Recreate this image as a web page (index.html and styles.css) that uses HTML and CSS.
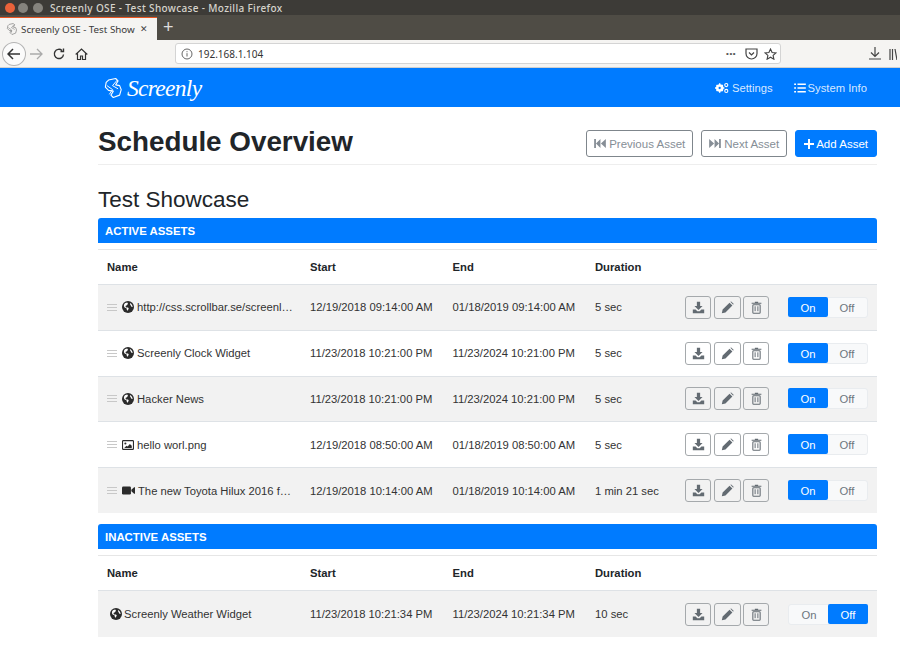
FILE: index.html
```html
<!DOCTYPE html>
<html lang="en">
<head>
  <meta charset="UTF-8">
  <title>Screenly OSE - Test Showcase</title>
  <link rel="stylesheet" href="styles.css">
</head>
<body>
  <svg class="defs" width="0" height="0">
    <symbol id="i-globe" viewBox="0 0 16 16">
      <circle cx="8" cy="8" r="8" fill="currentColor"/>
      <path d="M4.500 2.500l2.500-.5 1 1.500-1.500 2-2 1 1 2 2.500 0 1 1.500-1.500 3-1-1-.5-2.500-2.500-1-1-2 .5-2.500zM11 2.500l2 2 1.500 3-2 0-1-2-1-1.500z" fill="#fff"/>
    </symbol>
    <symbol id="i-image" viewBox="0 0 16 14">
      <rect x="0.700" y="1.200" width="14.600" height="11.600" rx="1" fill="none" stroke="currentColor" stroke-width="1.500"/>
      <circle cx="4.500" cy="5" r="1.400" fill="currentColor"/>
      <path d="M3 11l3-3 1.500 1 3-3.500 2.500 2.500v3z" fill="currentColor"/>
    </symbol>
    <symbol id="i-video" viewBox="0 0 16 12">
      <rect x="0" y="1" width="11" height="10" rx="1.500" fill="currentColor"/>
      <path d="M11.500 5l3.500-3h1v8h-1l-3.500-3z" fill="currentColor"/>
    </symbol>
    <symbol id="i-download" viewBox="0 0 16 16">
      <path d="M6 1h4v5h3l-5 5-5-5h3z" fill="currentColor"/>
      <path d="M1 10.500h3.500l2 2h3l2-2H15V15H1z" fill="currentColor"/>
    </symbol>
    <symbol id="i-pencil" viewBox="0 0 16 16">
      <path d="M1 15l1-4.500 8.500-8.500 3.500 3.500-8.500 8.500zM11.500 1l1-.500 3 3-.500 1z" fill="currentColor"/>
    </symbol>
    <symbol id="i-trash" viewBox="0 0 14 16">
      <path d="M5 2V1h4v1h4v1.500H1V2z" fill="currentColor"/>
      <rect x="2.500" y="4.500" width="9" height="10.500" rx="1" fill="none" stroke="currentColor" stroke-width="1.300"/>
      <path d="M5.300 6.500v6M8.700 6.500v6" stroke="currentColor" stroke-width="1.200"/>
    </symbol>
    <symbol id="i-gears" viewBox="0 0 18 14">
      <circle cx="6" cy="7" r="3.600" fill="none" stroke="currentColor" stroke-width="2.600"/>
      <path d="M6 1v12M0 7h12M2 3l8 8M10 3l-8 8" stroke="currentColor" stroke-width="1.800"/>
      <circle cx="6" cy="7" r="1.500" fill="#007bff"/>
      <circle cx="14.500" cy="3.200" r="2" fill="none" stroke="currentColor" stroke-width="1.400"/>
      <circle cx="14.500" cy="10.800" r="2" fill="none" stroke="currentColor" stroke-width="1.400"/>
    </symbol>
    <symbol id="i-list" viewBox="0 0 14 12">
      <path d="M4 1.500h10M4 6h10M4 10.500h10" stroke="currentColor" stroke-width="1.600"/>
      <path d="M0 .700h2.200v1.600H0zM0 5.200h2.200v1.600H0zM0 9.700h2.200v1.600H0z" fill="currentColor"/>
    </symbol>
    <symbol id="i-prev" viewBox="0 0 13 10">
      <path d="M0 0h2v10H0zM7 0v10L2 5zM13 0v10L7.500 5z" fill="currentColor"/>
    </symbol>
    <symbol id="i-next" viewBox="0 0 13 10">
      <path d="M11 0h2v10h-2zM6 0v10l5-5zM0 0v10l5.500-5z" fill="currentColor"/>
    </symbol>
    <symbol id="i-plus" viewBox="0 0 10 10">
      <path d="M4 0h2v4h4v2H6v4H4V6H0V4h4z" fill="currentColor"/>
    </symbol>
    <symbol id="i-mark" viewBox="0 0 24 26">
      <path d="M7 3l9-2 3 3-3 5 5 1 2 5-2 7-8 3-3-3 3-5-6-1-4-4 1-6z" fill="none" stroke="currentColor" stroke-width="1.400" stroke-linejoin="round"/>
      <path d="M5 10l7 5-4 6M18 3l-6 7 7 4" fill="none" stroke="currentColor" stroke-width="1.200"/>
    </symbol>
  </svg>

  <!-- browser window -->
  <div class="titlebar">
    <span class="dot dot-close"></span>
    <span class="dot"></span>
    <span class="dot dot-max"></span>
    <span class="titlebar-text">Screenly OSE - Test Showcase - Mozilla Firefox</span>
  </div>
  <div class="tabstrip">
    <div class="tab">
      <svg class="tab-icon"><use href="#i-mark"/></svg>
      <span class="tab-title">Screenly OSE - Test Show</span>
      <span class="tab-close">&#10005;</span>
    </div>
    <span class="tab-new">+</span>
  </div>
  <div class="toolbar">
    <span class="back">
      <svg width="14" height="12" viewBox="0 0 14 12"><path d="M1 6h12M6 1L1 6l5 5" fill="none" stroke="#333" stroke-width="1.500"/></svg>
    </span>
    <svg class="tool tool-forward" width="14" height="12" viewBox="0 0 14 12"><path d="M1 6h12M8 1l5 5-5 5" fill="none" stroke="#aaa" stroke-width="1.300"/></svg>
    <svg class="tool tool-reload" width="12" height="12" viewBox="0 0 12 12"><path d="M10.500 6.500A4.600 4.600 0 1 1 9 2.500M10.500 .500v3h-3" fill="none" stroke="#333" stroke-width="1.400"/></svg>
    <svg class="tool tool-home" width="13" height="12" viewBox="0 0 13 12"><path d="M.700 6.500L6.500 1l5.800 5.500M2.500 5.500v6h3V8h2v3.500h3v-6" fill="none" stroke="#333" stroke-width="1.200"/></svg>
    <div class="urlbar">
      <svg class="url-info" width="12" height="12" viewBox="0 0 12 12"><circle cx="6" cy="6" r="5" fill="none" stroke="#666"/><path d="M6 5.200v3.300M6 3.200v1" stroke="#666"/></svg>
      <span class="url-text">192.168.1.104</span>
      <span class="url-dots">&bull;&bull;&bull;</span>
      <svg class="url-pocket" width="13" height="12" viewBox="0 0 13 12"><path d="M1 1h11v4.500a5.500 5.500 0 0 1-11 0zM4 4.500l2.500 2.500L9 4.500" fill="none" stroke="#444" stroke-width="1.200"/></svg>
      <svg class="url-star" width="13" height="12" viewBox="0 0 13 12"><path d="M6.500 1l1.600 3.500 3.800.400-2.800 2.500.800 3.800-3.400-2-3.400 2 .800-3.800L1.100 4.900l3.800-.400z" fill="none" stroke="#444" stroke-width="1.100"/></svg>
    </div>
    <svg class="tool tool-down" width="12" height="13" viewBox="0 0 12 13"><path d="M6 0v9M2 5.500L6 9.500l4-4M0 12h12" fill="none" stroke="#444" stroke-width="1.200"/></svg>
    <svg class="tool" width="8" height="12" viewBox="0 0 8 12"><path d="M1 1v11M3.500 1v11M6 1l2 11" fill="none" stroke="#444" stroke-width="1.200"/></svg>
  </div>

  <!-- page -->
  <nav class="navbar">
    <div class="container navbar-inner">
      <a class="brand">
        <svg class="brand-mark"><use href="#i-mark"/></svg>
        <span class="brand-name">Screenly</span>
      </a>
      <div class="nav-links">
        <a class="nav-link"><svg class="ico-gears"><use href="#i-gears"/></svg>Settings</a>
        <a class="nav-link"><svg class="ico-list"><use href="#i-list"/></svg>System Info</a>
      </div>
    </div>
  </nav>

  <main class="container">
    <header class="page-head">
      <h1>Schedule Overview</h1>
      <div class="head-actions">
        <a class="btn btn-outline"><svg class="ico-step"><use href="#i-prev"/></svg>Previous Asset</a>
        <a class="btn btn-outline"><svg class="ico-step"><use href="#i-next"/></svg>Next Asset</a>
        <a class="btn btn-primary"><svg class="ico-plus"><use href="#i-plus"/></svg>Add Asset</a>
      </div>
    </header>

    <h2>Test Showcase</h2>

    <section class="panel">
      <h3 class="panel-title">Active Assets</h3>
      <table class="assets">
        <thead>
          <tr><th class="col-name">Name</th><th class="col-date">Start</th><th class="col-date">End</th><th class="col-dur">Duration</th><th class="col-act"></th><th class="col-tog"></th></tr>
        </thead>
        <tbody>
          <tr>
            <td><div class="name"><span class="grip"></span><svg class="type"><use href="#i-globe"/></svg><span class="name-text">http://css.scrollbar.se/screenl…</span></div></td>
            <td>12/19/2018 09:14:00 AM</td><td>01/18/2019 09:14:00 AM</td><td>5 sec</td>
            <td><div class="acts"><a class="act"><svg class="ico-act"><use href="#i-download"/></svg></a><a class="act act-wide"><svg class="ico-act"><use href="#i-pencil"/></svg></a><a class="act"><svg class="ico-act"><use href="#i-trash"/></svg></a></div></td>
            <td><div class="toggle"><span class="tg tg-on">On</span><span class="tg">Off</span></div></td>
          </tr>
          <tr>
            <td><div class="name"><span class="grip"></span><svg class="type"><use href="#i-globe"/></svg><span class="name-text">Screenly Clock Widget</span></div></td>
            <td>11/23/2018 10:21:00 PM</td><td>11/23/2024 10:21:00 PM</td><td>5 sec</td>
            <td><div class="acts"><a class="act"><svg class="ico-act"><use href="#i-download"/></svg></a><a class="act act-wide"><svg class="ico-act"><use href="#i-pencil"/></svg></a><a class="act"><svg class="ico-act"><use href="#i-trash"/></svg></a></div></td>
            <td><div class="toggle"><span class="tg tg-on">On</span><span class="tg">Off</span></div></td>
          </tr>
          <tr>
            <td><div class="name"><span class="grip"></span><svg class="type"><use href="#i-globe"/></svg><span class="name-text">Hacker News</span></div></td>
            <td>11/23/2018 10:21:00 PM</td><td>11/23/2024 10:21:00 PM</td><td>5 sec</td>
            <td><div class="acts"><a class="act"><svg class="ico-act"><use href="#i-download"/></svg></a><a class="act act-wide"><svg class="ico-act"><use href="#i-pencil"/></svg></a><a class="act"><svg class="ico-act"><use href="#i-trash"/></svg></a></div></td>
            <td><div class="toggle"><span class="tg tg-on">On</span><span class="tg">Off</span></div></td>
          </tr>
          <tr>
            <td><div class="name"><span class="grip"></span><svg class="type"><use href="#i-image"/></svg><span class="name-text">hello worl.png</span></div></td>
            <td>12/19/2018 08:50:00 AM</td><td>01/18/2019 08:50:00 AM</td><td>5 sec</td>
            <td><div class="acts"><a class="act"><svg class="ico-act"><use href="#i-download"/></svg></a><a class="act act-wide"><svg class="ico-act"><use href="#i-pencil"/></svg></a><a class="act"><svg class="ico-act"><use href="#i-trash"/></svg></a></div></td>
            <td><div class="toggle"><span class="tg tg-on">On</span><span class="tg">Off</span></div></td>
          </tr>
          <tr>
            <td><div class="name"><span class="grip"></span><svg class="type type-video"><use href="#i-video"/></svg><span class="name-text">The new Toyota Hilux 2016 f…</span></div></td>
            <td>12/19/2018 10:14:00 AM</td><td>01/18/2019 10:14:00 AM</td><td>1 min 21 sec</td>
            <td><div class="acts"><a class="act"><svg class="ico-act"><use href="#i-download"/></svg></a><a class="act act-wide"><svg class="ico-act"><use href="#i-pencil"/></svg></a><a class="act"><svg class="ico-act"><use href="#i-trash"/></svg></a></div></td>
            <td><div class="toggle"><span class="tg tg-on">On</span><span class="tg">Off</span></div></td>
          </tr>
        </tbody>
      </table>
    </section>

    <section class="panel">
      <h3 class="panel-title">Inactive Assets</h3>
      <table class="assets">
        <thead>
          <tr><th class="col-name">Name</th><th class="col-date">Start</th><th class="col-date">End</th><th class="col-dur">Duration</th><th class="col-act"></th><th class="col-tog"></th></tr>
        </thead>
        <tbody>
          <tr>
            <td><div class="name name-inactive"><svg class="type"><use href="#i-globe"/></svg><span class="name-text">Screenly Weather Widget</span></div></td>
            <td>11/23/2018 10:21:34 PM</td><td>11/23/2024 10:21:34 PM</td><td>10 sec</td>
            <td><div class="acts"><a class="act"><svg class="ico-act"><use href="#i-download"/></svg></a><a class="act act-wide"><svg class="ico-act"><use href="#i-pencil"/></svg></a><a class="act"><svg class="ico-act"><use href="#i-trash"/></svg></a></div></td>
            <td><div class="toggle"><span class="tg">On</span><span class="tg tg-on">Off</span></div></td>
          </tr>
        </tbody>
      </table>
    </section>
  </main>
</body>
</html>
```

FILE: styles.css
```css
/* Base */
html, body {
  height: 655px;
  overflow: hidden;
}

body {
  margin: 0;
  font-family: "Liberation Sans", Arial, sans-serif;
  font-size: 11.250px;
  color: #212529;
  background: #fff;
}

.defs {
  position: absolute;
}

svg {
  display: block;
  flex: none;
}

/* Browser window */
.titlebar {
  display: flex;
  align-items: center;
  height: 15px;
  padding-left: 5px;
  background: #3d3b37;
}

.dot {
  width: 10px;
  height: 10px;
  margin-right: 3px;
  border-radius: 50%;
  background: #85837d;
}

.dot-close {
  background: #e9623a;
}

.dot-max {
  margin-left: 2px;
}

.titlebar-text {
  margin-left: 4px;
  font-family: "Noto Sans", sans-serif;
  font-size: 10px;
  font-weight: 500;
  letter-spacing: 0.350px;
  color: #d6d3cc;
}

.tabstrip {
  display: flex;
  align-items: flex-end;
  height: 25px;
  background: #4f4c45;
}

.tab {
  display: flex;
  align-items: center;
  box-sizing: border-box;
  width: 157px;
  height: 23px;
  padding-left: 6px;
  background: #f5f4f2;
  border-top: 1px solid #e95420;
  color: #3a3a3a;
}

.tab-icon {
  width: 11px;
  height: 12px;
  color: #777;
}

.tab-title {
  width: 116px;
  margin-left: 4px;
  white-space: nowrap;
  font-family: "Noto Sans", sans-serif;
  font-size: 9.800px;
}

.tab-close {
  margin-left: 3px;
  font-size: 9px;
  color: #444;
}

.tab-new {
  margin: 0 0 3px 6px;
  font-size: 18px;
  line-height: 20px;
  color: #ddd;
}

.toolbar {
  display: flex;
  align-items: center;
  box-sizing: border-box;
  height: 28px;
  padding: 0 3px 0 2px;
  background: #f5f4f2;
  border-bottom: 1px solid #cfcfcf;
}

.back {
  display: flex;
  align-items: center;
  justify-content: center;
  box-sizing: border-box;
  width: 24px;
  height: 24px;
  background: #fbfbfb;
  border: 1px solid #b4b4b4;
  border-radius: 50%;
}

.tool-forward {
  margin-left: 3px;
}

.tool-reload {
  margin-left: 10px;
}

.tool-home {
  margin-left: 10px;
}

.urlbar {
  display: flex;
  align-items: center;
  box-sizing: border-box;
  width: 607px;
  height: 21px;
  margin-left: 87px;
  padding: 0 3px 0 5px;
  background: #fff;
  border: 1px solid #d4d4d4;
  border-radius: 3px;
}

.url-text {
  margin-left: 5px;
  font-family: "Noto Sans", sans-serif;
  font-size: 10px;
  color: #333;
}

.url-dots {
  margin-left: auto;
  font-size: 8px;
  letter-spacing: 0.500px;
  color: #555;
}

.url-pocket {
  margin-left: 9px;
}

.url-star {
  margin-left: 6px;
}

.tool-down {
  margin-left: 88px;
}

.toolbar > svg:last-child {
  margin-left: 8px;
}

/* Navbar */
.container {
  box-sizing: border-box;
  width: 779px;
  margin-left: 98px;
}

.navbar {
  height: 39px;
  background: #007bff;
  color: #fff;
}

.navbar-inner {
  display: flex;
  align-items: center;
  justify-content: space-between;
  height: 100%;
}

.brand {
  display: flex;
  align-items: center;
  margin-left: 5px;
}

.brand-mark {
  width: 19px;
  height: 24px;
}

.brand-name {
  margin-left: 5px;
  font-family: "Liberation Serif", serif;
  font-size: 23.500px;
  font-style: italic;
  line-height: 30px;
  letter-spacing: -0.700px;
}

.nav-links {
  display: flex;
  gap: 21px;
  margin-right: 10px;
}

.nav-link {
  display: flex;
  align-items: center;
  gap: 2px;
  color: rgba(255, 255, 255, 0.85);
}

.ico-gears {
  width: 14px;
  height: 12px;
  margin-right: 1px;
  color: #fff;
}

.ico-list {
  width: 12px;
  height: 10px;
  color: #fff;
}

/* Page header */
.page-head {
  display: flex;
  align-items: center;
  justify-content: space-between;
  box-sizing: border-box;
  height: 58px;
  padding-top: 12px;
  border-bottom: 1px solid #eeeeee;
}

h1 {
  margin: 0;
  font-size: 27.800px;
  font-weight: 700;
  line-height: 34px;
}

.head-actions {
  display: flex;
  gap: 8px;
  margin-top: 4px;
}

.btn {
  display: flex;
  align-items: center;
  box-sizing: border-box;
  height: 27px;
  padding: 0 7px;
  border: 1px solid #7f868c;
  border-radius: 3px;
  font-size: 11.500px;
  color: #868e96;
}

.btn-primary {
  padding: 0 8px;
  background: #007bff;
  border-color: #007bff;
  color: #fff;
}

.ico-step {
  width: 12px;
  height: 9px;
  margin-right: 3px;
}

.ico-plus {
  width: 10px;
  height: 10px;
  margin-right: 2px;
}

h2 {
  margin: 21px 0 4px;
  font-size: 22.500px;
  font-weight: 400;
  line-height: 28px;
}

/* Asset panels */
.panel {
  margin-bottom: 11px;
}

.panel-title {
  box-sizing: border-box;
  height: 25px;
  margin: 0 0 6px;
  padding-left: 7px;
  background: #007bff;
  border-radius: 3px 3px 0 0;
  font-size: 11.400px;
  font-weight: 700;
  line-height: 27px;
  text-transform: uppercase;
  color: #fff;
}

.assets {
  width: 100%;
  table-layout: fixed;
  border-collapse: collapse;
}

.assets th {
  box-sizing: border-box;
  height: 35px;
  padding: 0 0 0 9px;
  border-top: 1px solid #e6e6e6;
  border-bottom: 1px solid #dee2e6;
  text-align: left;
  font-weight: 700;
}

.assets td {
  box-sizing: border-box;
  height: 45.800px;
  padding: 0 0 0 9px;
  border-bottom: 1px solid #dee2e6;
  color: #333;
}

.assets tbody tr:nth-child(odd) td {
  background: #f2f2f2;
}

.assets tbody tr:last-child td {
  border-bottom: 0;
}

.col-name {
  width: 203px;
}

.col-date {
  width: 142.500px;
}

.col-dur {
  width: 90px;
}

.col-tog {
  width: 98px;
}

.name {
  display: flex;
  align-items: center;
  gap: 3px;
  padding-right: 6px;
}

.name-inactive {
  gap: 2px;
  padding-left: 3px;
}

.grip {
  flex: none;
  box-sizing: border-box;
  width: 10px;
  height: 7px;
  margin-right: 2px;
  border-top: 1px solid #c8c8c8;
  border-bottom: 1px solid #c8c8c8;
  background: linear-gradient(#c8c8c8, #c8c8c8) center / 100% 1px no-repeat;
}

.type {
  width: 12px;
  height: 12px;
  color: #2b2b2b;
}

.type-video {
  width: 13px;
  height: 11px;
}

.name-text {
  white-space: nowrap;
}

.acts {
  display: flex;
  gap: 2.500px;
}

.act {
  display: flex;
  flex: none;
  align-items: center;
  justify-content: center;
  box-sizing: border-box;
  width: 26px;
  height: 23px;
  border: 1px solid #a5a9ac;
  border-radius: 3px;
  color: #636b72;
}

.act-wide {
  width: 27px;
}

.ico-act {
  width: 13px;
  height: 13px;
}

.toggle {
  display: flex;
  box-sizing: border-box;
  width: 80px;
  height: 21px;
  background: #f8f9fa;
  border: 1px solid #e9ecef;
  border-radius: 3px;
}

.tg {
  flex: 1;
  text-align: center;
  line-height: 20px;
  color: #6c757d;
}

.tg-on {
  margin: -1px -1px 0;
  background: #007bff;
  border-radius: 2px;
  line-height: 22px;
  color: #fff;
}
```
